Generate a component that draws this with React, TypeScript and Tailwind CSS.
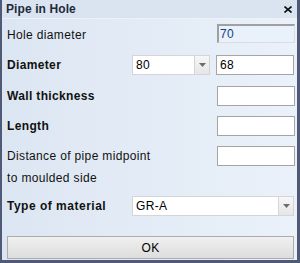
import React from "react";

const font = { fontFamily: "'Liberation Sans', Arial, sans-serif" };

function Arrow() {
  return (
    <svg width="7" height="4" viewBox="0 0 7 4">
      <path d="M0 0h7L3.5 4z" fill="#6d6d6d" />
    </svg>
  );
}

function Combo({ value, width }: { value: string; width: string }) {
  return (
    <div className={`flex h-[20px] ${width} border border-[#d5d5d5] bg-white`}>
      <div className="flex flex-1 items-center pl-[3px] text-[12px] text-black">{value}</div>
      <div className="flex w-[15px] items-center justify-center border-l border-[#d5d5d5] bg-gradient-to-b from-[#f7f7f7] to-[#e6e6e6]">
        <Arrow />
      </div>
    </div>
  );
}

function Input({ value, ro }: { value?: string; ro?: boolean }) {
  return (
    <div
      className={
        ro
          ? "flex h-[19px] w-[78px] items-center border-t-2 border-l-2 border-r border-b border-t-[#a0a0a0] border-l-[#a0a0a0] border-r-[#dcdcdc] border-b-[#dcdcdc] bg-[#e9f1fb] pl-[1px] text-[12px] text-[#1a3f80]"
          : "flex h-[20px] w-[78px] items-center border border-[#a5a5a5] bg-white pl-[3px] text-[12px] text-black"
      }
    >
      {value}
    </div>
  );
}

export default function App() {
  return (
    <div
      className="flex h-[263px] w-[300px] flex-col bg-[#4e5a76] pb-[3px] pl-[2px] pr-[3px] tracking-[0.35px]"
      style={font}
    >
      <div className="flex h-[19px] items-center justify-between border-b border-[#edf2f9] bg-[#dae4f1] pl-[4px] pr-[5px]">
        <span className="text-[12px] font-bold tracking-[0.1px] text-[#1f2a3a]">Pipe in Hole</span>
        <svg width="8" height="7" viewBox="0 0 8 7">
          <path d="M0.5 0.5L7.5 6.5M7.5 0.5L0.5 6.5" stroke="#111" strokeWidth="1.6" />
        </svg>
      </div>
      <div className="flex flex-1 flex-col bg-gradient-to-r from-[#dce6f2] to-[#eaf1fa] pl-[5px] pr-[2px] text-[12px] text-[#111]">
        <div className="mt-[5px] flex h-[19px] items-center">
          <span className="flex-1 pt-[3px]">Hole diameter</span>
          <Input value="70" ro />
        </div>
        <div className="mt-[12px] flex h-[20px] items-center">
          <span className="w-[125px] font-bold">Diameter</span>
          <Combo value="80" width="w-[78px]" />
          <div className="ml-[6px]">
            <Input value="68" />
          </div>
        </div>
        <div className="mt-[11px] flex h-[20px] items-center">
          <span className="flex-1 font-bold">Wall thickness</span>
          <Input />
        </div>
        <div className="mt-[10px] flex h-[20px] items-center">
          <span className="flex-1 font-bold">Length</span>
          <Input />
        </div>
        <div className="mt-[10px] flex items-start">
          <div className="flex flex-1 flex-col leading-[22px]">
            <span className="mt-[-1px]">Distance of pipe midpoint</span>
            <span>to moulded side</span>
          </div>
          <Input />
        </div>
        <div className="mt-[7px] flex h-[20px] items-center">
          <span className="w-[125px] font-bold tracking-[0.5px]">Type of material</span>
          <Combo value="GR-A" width="w-[162px]" />
        </div>
        <div className="mt-[20px] mr-[1px] flex h-[23px] items-center justify-center border border-[#acacac] bg-gradient-to-b from-[#f0f0f0] to-[#dddddd] text-[12px] text-black">
          OK
        </div>
      </div>
    </div>
  );
}
